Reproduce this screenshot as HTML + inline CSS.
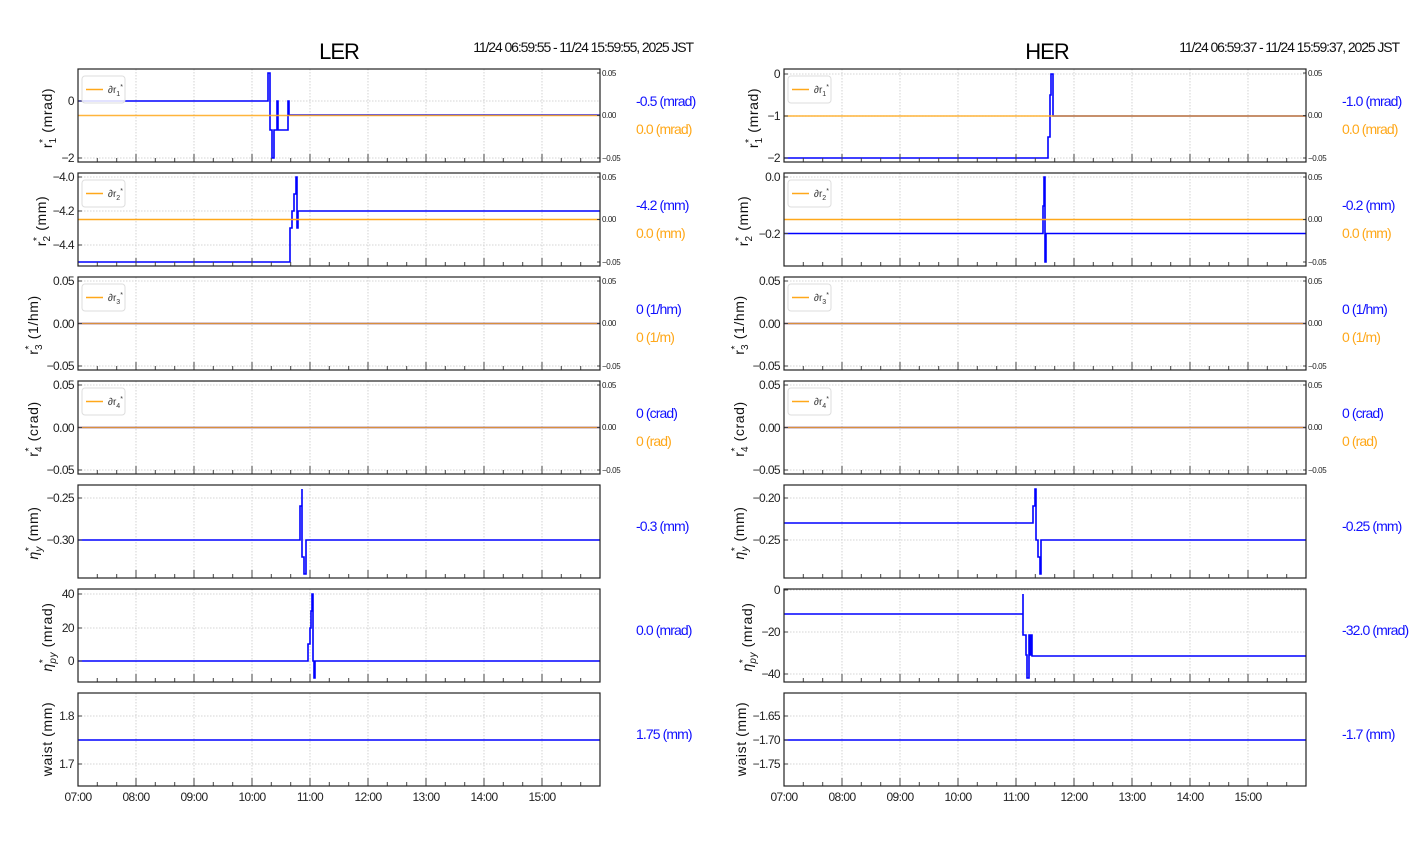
<!DOCTYPE html>
<html><head><meta charset="utf-8"><style>
body{margin:0;background:#fff}
svg{display:block;font-family:"Liberation Sans Narrow","Liberation Sans",sans-serif}
.yl{font-size:14px;fill:#111;letter-spacing:0.6px}
.tk{font-size:12px;fill:#222;letter-spacing:-0.6px}
.rt{font-size:8px;fill:#222;letter-spacing:-0.4px}
.vb{font-size:14px;fill:#1010ff;letter-spacing:-0.9px}
.vo{font-size:14px;fill:#ffa81a;letter-spacing:-0.9px}
.lg{font-size:10px;fill:#333}
</style></head><body>
<svg id="s" width="1412" height="864" viewBox="0 0 1412 864" xmlns="http://www.w3.org/2000/svg">
<g id="grid"></g>
<g id="data" fill="none" stroke-width="1.6">
<path stroke="#0000ff" d="M78,101 H268 V87 V73 H270 V115 V130 H272 V144 V158 H274 V130 H277 V101 H278 V130 H288 V101 H289 V115 H600"/>
<path stroke="#ffa81a" stroke-opacity="0.85" d="M78,115.5 H600"/>
<path stroke="#0000ff" d="M78,262 H290 V245 V228 H292 V211 H294 V194 H296 V177 H297 V228 H298 V211 H600"/>
<path stroke="#ffa81a" d="M78,219.5 H600"/>
<path stroke="#0000ff" d="M78,323.5 H600"/>
<path stroke="#ffa81a" stroke-opacity="0.85" d="M78,323.5 H600"/>
<path stroke="#0000ff" d="M78,427.5 H600"/>
<path stroke="#ffa81a" stroke-opacity="0.85" d="M78,427.5 H600"/>
<path stroke="#0000ff" d="M78,540 H300 V515 V506 H302 V489 V557 H304 V574 H306 V540 H600"/>
<path stroke="#0000ff" d="M78,661 H308 V644 H310 V628 H311 V611 H312 V594 H313 V661 H314 V678 H315 V661 H600"/>
<path stroke="#0000ff" d="M78,740 H600"/>
<path stroke="#0000ff" d="M784,158 H1048 V137 H1050 V95 H1051 V74 H1053 V116 H1306"/>
<path stroke="#ffa81a" stroke-opacity="0.85" d="M784,116 H1306"/>
<path stroke="#0000ff" d="M784,233.5 H1043 V206 H1044 V177 H1045 V262 H1046 V233.5 H1306"/>
<path stroke="#ffa81a" d="M784,219.5 H1306"/>
<path stroke="#0000ff" d="M784,323.5 H1306"/>
<path stroke="#ffa81a" stroke-opacity="0.85" d="M784,323.5 H1306"/>
<path stroke="#0000ff" d="M784,427.5 H1306"/>
<path stroke="#ffa81a" stroke-opacity="0.85" d="M784,427.5 H1306"/>
<path stroke="#0000ff" d="M784,523 H1033 V506 H1035 V489 H1036 V540 H1038 V557 H1040 V574 H1041 V540 H1306"/>
<path stroke="#0000ff" d="M784,614 H1023 V594 V635 H1026 V655 H1027 V678 H1029 V635 H1030 V655 H1031 V635 H1032 V656 H1306"/>
<path stroke="#0000ff" d="M784,740 H1306"/>
</g>
<g id="frames"></g>

<text x="339" y="59" font-size="22" text-anchor="middle" fill="#000" letter-spacing="-1">LER</text>
<text x="693" y="52" font-size="14" text-anchor="end" fill="#111" letter-spacing="-1.1">11/24 06:59:55 - 11/24 15:59:55, 2025 JST</text>
<text x="1047" y="59" font-size="22" text-anchor="middle" fill="#000" letter-spacing="-1">HER</text>
<text x="1399" y="52" font-size="14" text-anchor="end" fill="#111" letter-spacing="-1.1">11/24 06:59:37 - 11/24 15:59:37, 2025 JST</text>

<g id="legends"></g>
<g class="lg">
<text x="108" y="93">∂r<tspan font-size="7" dy="3">1</tspan><tspan font-size="7" dy="-7">*</tspan></text>
<text x="108" y="197">∂r<tspan font-size="7" dy="3">2</tspan><tspan font-size="7" dy="-7">*</tspan></text>
<text x="108" y="301">∂r<tspan font-size="7" dy="3">3</tspan><tspan font-size="7" dy="-7">*</tspan></text>
<text x="108" y="405">∂r<tspan font-size="7" dy="3">4</tspan><tspan font-size="7" dy="-7">*</tspan></text>
<text x="814" y="93">∂r<tspan font-size="7" dy="3">1</tspan><tspan font-size="7" dy="-7">*</tspan></text>
<text x="814" y="197">∂r<tspan font-size="7" dy="3">2</tspan><tspan font-size="7" dy="-7">*</tspan></text>
<text x="814" y="301">∂r<tspan font-size="7" dy="3">3</tspan><tspan font-size="7" dy="-7">*</tspan></text>
<text x="814" y="405">∂r<tspan font-size="7" dy="3">4</tspan><tspan font-size="7" dy="-7">*</tspan></text>
</g>

<g class="tk" text-anchor="end">
<text x="74" y="105">0</text><text x="74" y="162">−2</text>
<text x="74" y="181">−4.0</text><text x="74" y="215">−4.2</text><text x="74" y="249">−4.4</text>
<text x="74" y="285">0.05</text><text x="74" y="328">0.00</text><text x="74" y="370">−0.05</text>
<text x="74" y="389">0.05</text><text x="74" y="432">0.00</text><text x="74" y="474">−0.05</text>
<text x="74" y="502">−0.25</text><text x="74" y="544">−0.30</text>
<text x="74" y="598">40</text><text x="74" y="632">20</text><text x="74" y="665">0</text>
<text x="74" y="720">1.8</text><text x="74" y="768">1.7</text>
<text x="780" y="78">0</text><text x="780" y="120">−1</text><text x="780" y="162">−2</text>
<text x="780" y="181">0.0</text><text x="780" y="238">−0.2</text>
<text x="780" y="285">0.05</text><text x="780" y="328">0.00</text><text x="780" y="370">−0.05</text>
<text x="780" y="389">0.05</text><text x="780" y="432">0.00</text><text x="780" y="474">−0.05</text>
<text x="780" y="502">−0.20</text><text x="780" y="544">−0.25</text>
<text x="780" y="594">0</text><text x="780" y="636">−20</text><text x="780" y="678">−40</text>
<text x="780" y="720">−1.65</text><text x="780" y="744">−1.70</text><text x="780" y="768">−1.75</text>
</g>

<g class="rt">
<text x="602" y="76">0.05</text><text x="602" y="118">0.00</text><text x="602" y="161">−0.05</text>
<text x="602" y="180">0.05</text><text x="602" y="222">0.00</text><text x="602" y="265">−0.05</text>
<text x="602" y="284">0.05</text><text x="602" y="326">0.00</text><text x="602" y="369">−0.05</text>
<text x="602" y="388">0.05</text><text x="602" y="430">0.00</text><text x="602" y="473">−0.05</text>
<text x="1308" y="76">0.05</text><text x="1308" y="118">0.00</text><text x="1308" y="161">−0.05</text>
<text x="1308" y="180">0.05</text><text x="1308" y="222">0.00</text><text x="1308" y="265">−0.05</text>
<text x="1308" y="284">0.05</text><text x="1308" y="326">0.00</text><text x="1308" y="369">−0.05</text>
<text x="1308" y="388">0.05</text><text x="1308" y="430">0.00</text><text x="1308" y="473">−0.05</text>
</g>

<g>
<text class="vb" x="636" y="106">-0.5 (mrad)</text><text class="vo" x="636" y="134">0.0 (mrad)</text>
<text class="vb" x="636" y="210">-4.2 (mm)</text><text class="vo" x="636" y="238">0.0 (mm)</text>
<text class="vb" x="636" y="314">0 (1/hm)</text><text class="vo" x="636" y="342">0 (1/m)</text>
<text class="vb" x="636" y="418">0 (crad)</text><text class="vo" x="636" y="446">0 (rad)</text>
<text class="vb" x="636" y="531">-0.3 (mm)</text>
<text class="vb" x="636" y="635">0.0 (mrad)</text>
<text class="vb" x="636" y="739">1.75 (mm)</text>
<text class="vb" x="1342" y="106">-1.0 (mrad)</text><text class="vo" x="1342" y="134">0.0 (mrad)</text>
<text class="vb" x="1342" y="210">-0.2 (mm)</text><text class="vo" x="1342" y="238">0.0 (mm)</text>
<text class="vb" x="1342" y="314">0 (1/hm)</text><text class="vo" x="1342" y="342">0 (1/m)</text>
<text class="vb" x="1342" y="418">0 (crad)</text><text class="vo" x="1342" y="446">0 (rad)</text>
<text class="vb" x="1342" y="531">-0.25 (mm)</text>
<text class="vb" x="1342" y="635">-32.0 (mrad)</text>
<text class="vb" x="1342" y="739">-1.7 (mm)</text>
</g>

<g class="yl" text-anchor="middle">
<text transform="translate(52,118) rotate(-90)">r<tspan font-size="10" dy="-6">*</tspan><tspan font-size="10" dx="-5" dy="10">1</tspan><tspan dy="-4"> (mrad)</tspan></text>
<text transform="translate(46,221) rotate(-90)">r<tspan font-size="10" dy="-6">*</tspan><tspan font-size="10" dx="-5" dy="10">2</tspan><tspan dy="-4"> (mm)</tspan></text>
<text transform="translate(38,325) rotate(-90)">r<tspan font-size="10" dy="-6">*</tspan><tspan font-size="10" dx="-5" dy="10">3</tspan><tspan dy="-4"> (1/hm)</tspan></text>
<text transform="translate(38,429) rotate(-90)">r<tspan font-size="10" dy="-6">*</tspan><tspan font-size="10" dx="-5" dy="10">4</tspan><tspan dy="-4"> (crad)</tspan></text>
<text transform="translate(38,533) rotate(-90)"><tspan font-style="italic">η</tspan><tspan font-size="10" dy="-6">*</tspan><tspan font-size="10" font-style="italic" dx="-5" dy="10">y</tspan><tspan dy="-4"> (mm)</tspan></text>
<text transform="translate(52,637) rotate(-90)"><tspan font-style="italic">η</tspan><tspan font-size="10" dy="-6">*</tspan><tspan font-size="10" font-style="italic" dx="-5" dy="10">py</tspan><tspan dy="-4"> (mrad)</tspan></text>
<text transform="translate(52,739) rotate(-90)">waist (mm)</text>

<text transform="translate(758,118) rotate(-90)">r<tspan font-size="10" dy="-6">*</tspan><tspan font-size="10" dx="-5" dy="10">1</tspan><tspan dy="-4"> (mrad)</tspan></text>
<text transform="translate(748,221) rotate(-90)">r<tspan font-size="10" dy="-6">*</tspan><tspan font-size="10" dx="-5" dy="10">2</tspan><tspan dy="-4"> (mm)</tspan></text>
<text transform="translate(744,325) rotate(-90)">r<tspan font-size="10" dy="-6">*</tspan><tspan font-size="10" dx="-5" dy="10">3</tspan><tspan dy="-4"> (1/hm)</tspan></text>
<text transform="translate(744,429) rotate(-90)">r<tspan font-size="10" dy="-6">*</tspan><tspan font-size="10" dx="-5" dy="10">4</tspan><tspan dy="-4"> (crad)</tspan></text>
<text transform="translate(744,533) rotate(-90)"><tspan font-style="italic">η</tspan><tspan font-size="10" dy="-6">*</tspan><tspan font-size="10" font-style="italic" dx="-5" dy="10">y</tspan><tspan dy="-4"> (mm)</tspan></text>
<text transform="translate(752,637) rotate(-90)"><tspan font-style="italic">η</tspan><tspan font-size="10" dy="-6">*</tspan><tspan font-size="10" font-style="italic" dx="-5" dy="10">py</tspan><tspan dy="-4"> (mrad)</tspan></text>
<text transform="translate(746,739) rotate(-90)">waist (mm)</text>
</g>

<g class="tk" text-anchor="middle">
<text x="78" y="801">07:00</text><text x="136" y="801">08:00</text><text x="194" y="801">09:00</text><text x="252" y="801">10:00</text><text x="310" y="801">11:00</text><text x="368" y="801">12:00</text><text x="426" y="801">13:00</text><text x="484" y="801">14:00</text><text x="542" y="801">15:00</text>
<text x="784" y="801">07:00</text><text x="842" y="801">08:00</text><text x="900" y="801">09:00</text><text x="958" y="801">10:00</text><text x="1016" y="801">11:00</text><text x="1074" y="801">12:00</text><text x="1132" y="801">13:00</text><text x="1190" y="801">14:00</text><text x="1248" y="801">15:00</text>
</g>
</svg>
<script>
(function(){
var NS="http://www.w3.org/2000/svg";
function el(p,n,a){var e=document.createElementNS(NS,n);for(var k in a)e.setAttribute(k,a[k]);p.appendChild(e);return e;}
var g=document.getElementById('grid'),f=document.getElementById('frames'),lg=document.getElementById('legends');
var yt={0:[[101,158],[177,211,245],[281,323.5,366],[385,427.5,470],[498,540],[594,628,661],[716,764]],
1:[[74,116,158],[177,233.5],[281,323.5,366],[385,427.5,470],[498,540],[590,632,674],[716,740,764]]};
[78,784].forEach(function(x0,side){
 var x1=x0+522;
 for(var k=0;k<7;k++){
  var T=69+104*k,B=T+93;
  var d="";
  for(var h=1;h<9;h++){var x=x0+58*h;d+="M"+x+","+T+"V"+B;}
  yt[side][k].forEach(function(y){d+="M"+x0+","+y+"H"+x1;});
  el(g,'path',{d:d,stroke:'#c8c8c8','stroke-width':0.8,'stroke-dasharray':'1.5,1.5',fill:'none'});
  var t="";
  for(var m=1;m<27;m++){var x=x0+m*58/3;t+="M"+x.toFixed(1)+","+B+"v-"+(m%3==0?8:4);}
  yt[side][k].forEach(function(y){t+="M"+x0+","+y+"h4";});
  if(k<4){[T+4,T+46.5,T+89].forEach(function(y){t+="M"+x1+","+y+"h-3";});}
  el(f,'path',{d:t,stroke:'#444','stroke-width':1,fill:'none'});
  el(f,'rect',{x:x0,y:T,width:522,height:93,fill:'none',stroke:'#222','stroke-width':1.2});
  if(k<4){var lx=x0+4,ly=T+7;
   el(lg,'rect',{x:lx,y:ly,width:43,height:27,rx:3,fill:'#fff','fill-opacity':0.85,stroke:'#ddd','stroke-width':1});
   el(lg,'path',{d:"M"+(lx+4)+","+(ly+13.5)+"h17",stroke:'#ffa81a','stroke-width':1.6});}
 }
});
})();
</script>
</body></html>
